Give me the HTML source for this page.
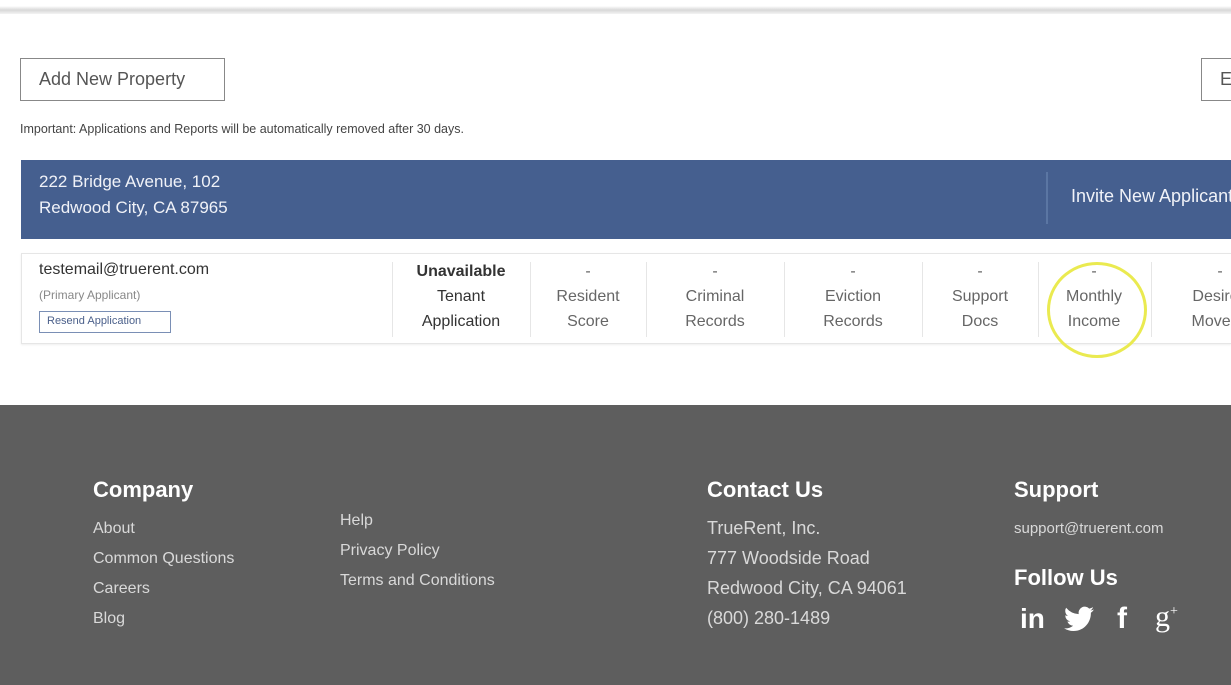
<!DOCTYPE html>
<html><head><meta charset="utf-8"><style>
*{margin:0;padding:0;box-sizing:border-box}
body{width:1231px;height:685px;overflow:hidden;background:#fff;font-family:"Liberation Sans",sans-serif;position:relative}
.a{position:absolute;white-space:nowrap}
.top{left:0;top:0;width:1231px;height:14px;background:linear-gradient(#fff 0,#fff 6px,#d8d8d8 10px,#f4f4f4 14px)}
.btn{border:1.5px solid #888;background:#fff;color:#555;font-size:18px}
.band{left:21px;top:160px;width:1210px;height:79px;background:#455f8f;color:#f0f2f8}
.row{left:21px;top:253px;width:1210px;height:91px;border:1px solid #e6e6e6;border-right:none;box-shadow:0 1px 2px #eee}
.col{top:259px;text-align:center;color:#666;font-size:16px;line-height:25px}
.sep{top:262px;width:1px;height:75px;background:#e6e6e6}
.foot{left:0;top:405px;width:1231px;height:280px;background:#5e5e5e}
.h{color:#fff;font-weight:bold;font-size:22px}
.l{color:#d9d9d9;font-size:16px}
</style></head><body>
<div class="a top"></div>
<div class="a btn" style="left:20px;top:58px;width:205px;height:43px;line-height:40px;padding-left:18px">Add New Property</div>
<div class="a btn" style="left:1201px;top:58px;width:40px;height:43px;line-height:40px;padding-left:18px">E</div>
<div class="a" style="left:20px;top:122px;font-size:12.5px;color:#444">Important: Applications and Reports will be automatically removed after 30 days.</div>
<div class="a band">
 <div class="a" style="left:18px;top:9px;font-size:17px;line-height:26px">222 Bridge Avenue, 102<br>Redwood City, CA 87965</div>
 <div class="a" style="left:1025px;top:12px;width:2px;height:52px;background:#5b76a3"></div>
 <div class="a" style="left:1050px;top:26px;font-size:18px">Invite New Applicant</div>
</div>
<div class="a row"></div>
<div class="a" style="left:39px;top:261px;font-size:16px;color:#333">testemail@truerent.com</div>
<div class="a" style="left:39px;top:288px;font-size:12px;color:#888">(Primary Applicant)</div>
<div class="a" style="left:39px;top:311px;width:132px;height:22px;border:1.5px solid #7a8fb5;font-size:11px;color:#4a5f8a;line-height:18px;padding-left:7px">Resend Application</div>
<div class="a sep" style="left:392px"></div>
<div class="a col" style="left:400px;width:122px;color:#333"><b style="color:#333">Unavailable</b><br>Tenant<br>Application</div>
<div class="a sep" style="left:530px"></div>
<div class="a col" style="left:530px;width:116px">-<br>Resident<br>Score</div>
<div class="a sep" style="left:646px"></div>
<div class="a col" style="left:646px;width:138px">-<br>Criminal<br>Records</div>
<div class="a sep" style="left:784px"></div>
<div class="a col" style="left:784px;width:138px">-<br>Eviction<br>Records</div>
<div class="a sep" style="left:922px"></div>
<div class="a col" style="left:922px;width:116px">-<br>Support<br>Docs</div>
<div class="a sep" style="left:1038px"></div>
<div class="a col" style="left:1038px;width:112px">-<br>Monthly<br>Income</div>
<div class="a sep" style="left:1151px"></div>
<div class="a col" style="left:1151px;width:138px">-<br>Desired<br>Move-in</div>
<div class="a" style="left:1047px;top:262px;width:100px;height:96px;border:3px solid #eaea50;border-radius:50%"></div>
<div class="a foot"></div>
<div class="a h" style="left:93px;top:477px">Company</div>
<div class="a l" style="left:93px;top:514px;line-height:30px">About<br>Common Questions<br>Careers<br>Blog</div>
<div class="a l" style="left:340px;top:506px;line-height:30px">Help<br>Privacy Policy<br>Terms and Conditions</div>
<div class="a h" style="left:707px;top:477px">Contact Us</div>
<div class="a l" style="left:707px;top:513px;line-height:30px;font-size:18px">TrueRent, Inc.<br>777 Woodside Road<br>Redwood City, CA 94061<br>(800) 280-1489</div>
<div class="a h" style="left:1014px;top:477px">Support</div>
<div class="a l" style="left:1014px;top:520px;font-size:15px">support@truerent.com</div>
<div class="a h" style="left:1014px;top:565px">Follow Us</div>
<div class="a" style="left:1020px;top:603px;color:#fff;font-size:28px;font-weight:bold">in</div>
<svg class="a" style="left:1064px;top:606px" width="30" height="26" viewBox="0 0 24 20"><path fill="#fff" d="M24 2.4a9.8 9.8 0 0 1-2.8.8A4.9 4.9 0 0 0 23.3.5a9.9 9.9 0 0 1-3.1 1.2A4.9 4.9 0 0 0 11.8 6.1 14 14 0 0 1 1.7 1a4.9 4.9 0 0 0 1.5 6.6 4.9 4.9 0 0 1-2.2-.6 4.9 4.9 0 0 0 3.9 4.9 4.9 4.9 0 0 1-2.2.1 4.9 4.9 0 0 0 4.6 3.4A9.9 9.9 0 0 1 0 17.4 14 14 0 0 0 7.5 19.6c9.1 0 14-7.5 14-14v-.6A10 10 0 0 0 24 2.4z"/></svg>
<div class="a" style="left:1117px;top:602px;color:#fff;font-size:30px;font-weight:bold">f</div>
<div class="a" style="left:1155px;top:600px;color:#fff;font-size:30px;font-family:'Liberation Serif',serif">g<sup style="font-size:14px">+</sup></div>
</body></html>
